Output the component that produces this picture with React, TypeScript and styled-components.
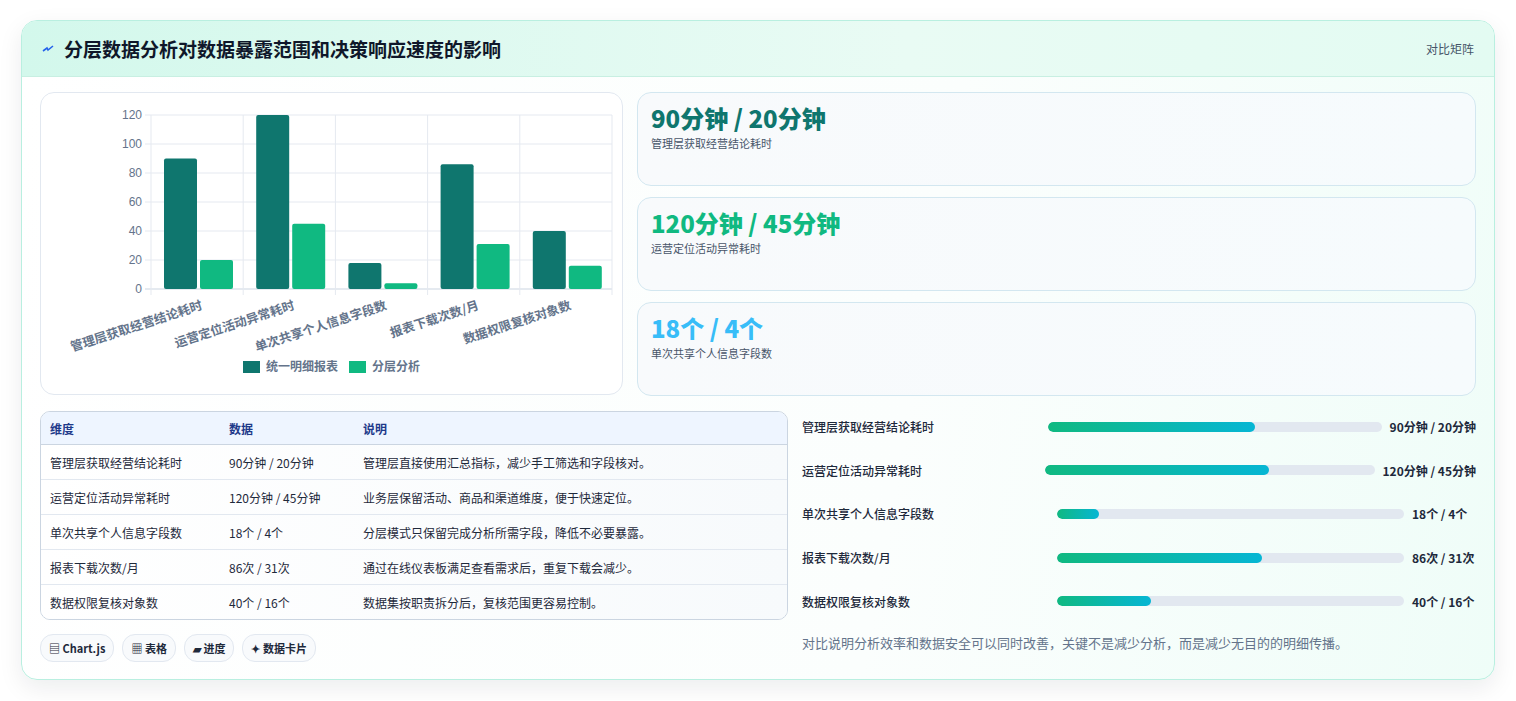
import React from "react";
import styled, { createGlobalStyle } from "styled-components";

const G = createGlobalStyle`
  body { margin: 0; background: #fff; font-family: "Noto Sans CJK SC", "Noto Sans", sans-serif; }
`;
const Page = styled.div` padding: 20px 21px; `;
const Card = styled.div`
  width: 1474px; height: 660px; box-sizing: border-box; border: 1px solid #b9efe0; border-radius: 16px;
  background: linear-gradient(100deg, #ffffff 0%, #fbfefd 60%, #effdf8 100%);
  box-shadow: 0 8px 24px rgba(15, 23, 42, 0.08); overflow: hidden; display: flex; flex-direction: column;
`;
const Header = styled.div`
  height: 55px; display: flex; align-items: center; justify-content: space-between; padding: 0 20px;
  background: linear-gradient(90deg, #d3f8ec 0%, #e9fbf4 60%, #e3fbf2 100%); border-bottom: 1px solid #c8efe2;
`;
const Title = styled.h1`
  margin: 0; font-size: 19px; font-weight: 700; color: #0f172a; display: flex; align-items: center; gap: 10px;
`;
const Meta = styled.span` font-size: 12px; color: #475569; `;
const Body = styled.div` padding: 15px 18px 0 18px; display: flex; flex-direction: column; gap: 15px; `;
const Row = styled.div` display: flex; gap: 14px; `;
const ChartCard = styled.div`
  width: 583px; height: 303px; box-sizing: border-box; border: 1px solid #e2e8f0; border-radius: 14px; background: #fff;
`;
const Stats = styled.div` flex: 1; display: flex; flex-direction: column; gap: 11px; `;
const Stat = styled.div`
  height: 94px; box-sizing: border-box; border: 1px solid #d3e7f0; border-radius: 14px; padding: 9px 13px;
  background: linear-gradient(90deg, #f8fafc, #f6fbfd);
`;
const StatVal = styled.div<{ $c: string }>` font-size: 24px; font-weight: 800; color: ${p => p.$c}; line-height: 32px; `;
const StatLbl = styled.div` font-size: 11px; color: #475569; margin-top: 1px; `;
const Left = styled.div` width: 748px; display: flex; flex-direction: column; gap: 14px; `;
const Table = styled.table`
  width: 100%; border-collapse: separate; border-spacing: 0; border: 1px solid #cbd5e1; border-radius: 10px; overflow: hidden;
  font-size: 12px; color: #1e293b;
  th { background: #eef5ff; color: #1e3a8a; font-weight: 700; text-align: left; height: 32px; padding: 0 9px; border-bottom: 1px solid #cbd5e1; }
  tbody tr { background: linear-gradient(90deg, #ffffff, #f7fafc); }
  td { height: 34px; padding: 0 9px; border-bottom: 1px solid #e2e8f0; }
  tr:last-child td { border-bottom: none; }
`;
const Tags = styled.div` display: flex; gap: 8px; `;
const Tag = styled.span`
  height: 26px; padding: 0 8px; display: inline-flex; align-items: center; border: 1px solid #e2e8f0; border-radius: 13px;
  background: #f8fafc; font-size: 11px; font-weight: 700; color: #1e293b;
`;
const Right = styled.div` flex: 1; display: flex; flex-direction: column; margin-top: -6px; `;
const PRow = styled.div`
  display: grid; grid-template-columns: 1fr 1.4fr auto; gap: 8px; align-items: center; height: 43.6px;
`;
const PLabel = styled.span` font-size: 12px; font-weight: 500; color: #1e293b; `;
const Track = styled.div` height: 10px; border-radius: 5px; background: #e2e8f0; overflow: hidden; `;
const Fill = styled.div` height: 100%; border-radius: 5px; background: linear-gradient(90deg, #10b981, #06b6d4); `;
const PVal = styled.span` min-width: 64px; font-size: 12px; font-weight: 700; color: #1e293b; `;
const Note = styled.p` margin: 10px 0 0; font-size: 13px; color: #64748b; `;

const cats = ["管理层获取经营结论耗时", "运营定位活动异常耗时", "单次共享个人信息字段数", "报表下载次数/月", "数据权限复核对象数"];
const a = [90, 120, 18, 86, 40];
const b = [20, 45, 4, 31, 16];
const vals = ["90分钟 / 20分钟", "120分钟 / 45分钟", "18个 / 4个", "86次 / 31次", "40个 / 16个"];
const descs = ["管理层直接使用汇总指标，减少手工筛选和字段核对。", "业务层保留活动、商品和渠道维度，便于快速定位。", "分层模式只保留完成分析所需字段，降低不必要暴露。", "通过在线仪表板满足查看需求后，重复下载会减少。", "数据集按职责拆分后，复核范围更容易控制。"];
const pct = [62, 68, 12, 59, 27];

function Chart() {
  const L = 110, R = 571, T = 22, B = 196, cw = (R - L) / 5, s = (B - T) / 120;
  return (
    <svg width="581" height="301" viewBox="0 0 581 301" fontFamily='"Noto Sans CJK SC", sans-serif'>
      {[0, 20, 40, 60, 80, 100, 120].map(v => {
        const y = B - v * s;
        return (
          <g key={v}>
            <line x1={L - 6} x2={R} y1={y} y2={y} stroke={v === 0 ? "#cbd5e1" : "#e5e9f0"} />
            <text x={L - 9} y={y + 4} fontSize="12" fill="#64748b" textAnchor="end" fontFamily="Liberation Sans, sans-serif">{v}</text>
          </g>
        );
      })}
      {[0, 1, 2, 3, 4, 5].map(i => (
        <line key={i} x1={L + i * cw} x2={L + i * cw} y1={T} y2={B + 6} stroke="#e5e9f0" />
      ))}
      {cats.map((c, i) => {
        const x = L + i * cw;
        const cx = x + cw / 2;
        return (
          <g key={c}>
            <rect x={x + 13} y={B - a[i] * s} width={33} height={a[i] * s} rx={2} fill="#0f766e" />
            <rect x={x + 49} y={B - b[i] * s} width={33} height={b[i] * s} rx={2} fill="#10b981" />
            <text x={cx + 6} y={B + 20} fontSize="12.5" fontWeight="700" fill="#64748b" textAnchor="end" transform={`rotate(-18 ${cx + 6} ${B + 20})`}>{c}</text>
          </g>
        );
      })}
      <rect x={202} y={268} width={17} height={12} fill="#0f766e" />
      <text x={225} y={278} fontSize="12" fontWeight="700" fill="#64748b">统一明细报表</text>
      <rect x={308} y={268} width={17} height={12} fill="#10b981" />
      <text x={331} y={278} fontSize="12" fontWeight="700" fill="#64748b">分层分析</text>
    </svg>
  );
}

export default function App() {
  return (
    <Page>
      <G />
      <Card>
        <Header>
          <Title>
            <svg width="12" height="10" viewBox="0 0 12 10"><path d="M1 7 L5 4 L6 6 L11 2" stroke="#2563eb" strokeWidth="1.6" fill="none" /></svg>
            分层数据分析对数据暴露范围和决策响应速度的影响
          </Title>
          <Meta>对比矩阵</Meta>
        </Header>
        <Body>
          <Row>
            <ChartCard><Chart /></ChartCard>
            <Stats>
              <Stat><StatVal $c="#0f766e">90分钟 / 20分钟</StatVal><StatLbl>管理层获取经营结论耗时</StatLbl></Stat>
              <Stat><StatVal $c="#10b981">120分钟 / 45分钟</StatVal><StatLbl>运营定位活动异常耗时</StatLbl></Stat>
              <Stat><StatVal $c="#38bdf8">18个 / 4个</StatVal><StatLbl>单次共享个人信息字段数</StatLbl></Stat>
            </Stats>
          </Row>
          <Row>
            <Left>
              <Table>
                <thead><tr><th style={{ width: 161 }}>维度</th><th style={{ width: 116 }}>数据</th><th>说明</th></tr></thead>
                <tbody>
                  {cats.map((c, i) => (
                    <tr key={c}><td>{c}</td><td>{vals[i]}</td><td>{descs[i]}</td></tr>
                  ))}
                </tbody>
              </Table>
              <Tags>
                <Tag>▤ Chart.js</Tag><Tag>▦ 表格</Tag><Tag>▰ 进度</Tag><Tag>✦ 数据卡片</Tag>
              </Tags>
            </Left>
            <Right>
              {cats.map((c, i) => (
                <PRow key={c}>
                  <PLabel>{c}</PLabel>
                  <Track><Fill style={{ width: `${pct[i]}%` }} /></Track>
                  <PVal>{vals[i]}</PVal>
                </PRow>
              ))}
              <Note>对比说明分析效率和数据安全可以同时改善，关键不是减少分析，而是减少无目的的明细传播。</Note>
            </Right>
          </Row>
        </Body>
      </Card>
    </Page>
  );
}
